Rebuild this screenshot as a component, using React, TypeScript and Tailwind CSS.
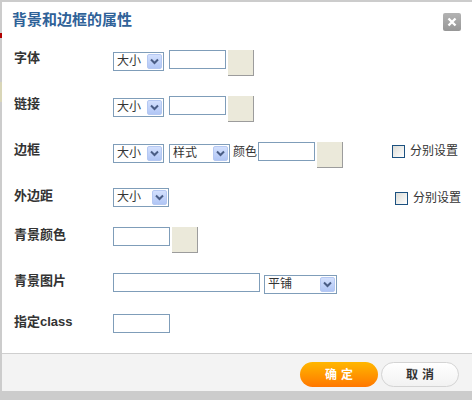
import React from "react";

const F = { fontFamily: '"Liberation Sans", "Noto Sans CJK SC", sans-serif' };

function Arrow() {
  return (
    <div className="w-[15px] h-[15px] mt-[1px] mr-[1px] rounded-[2px] border border-[#b5c8f2] bg-gradient-to-b from-[#d3e0fd] to-[#b1c6f5] flex items-center justify-center">
      <svg width="9" height="7" viewBox="0 0 9 7">
        <path d="M1 1.5 L4.5 5 L8 1.5" fill="none" stroke="#4a5d85" strokeWidth="2" />
      </svg>
    </div>
  );
}

function Select({ w, label }: { w: string; label: string }) {
  return (
    <div className={`${w} h-[19px] border border-[#7f9db9] bg-white flex items-start justify-between`}>
      <span className="pl-[3px] text-[12px] leading-[17px] text-[#333]">{label}</span>
      <Arrow />
    </div>
  );
}

function Input({ w }: { w: string }) {
  return <div className={`${w} h-[19px] border border-[#7f9db9] bg-white`} />;
}

function Swatch() {
  return <div className="w-[26px] h-[26px] bg-[#ebe9da] border-r border-b border-[#9c9c9c]" />;
}

function Check() {
  return (
    <div className="flex items-center gap-[5px]">
      <div className="w-[13px] h-[13px] border border-[#1c5180] bg-gradient-to-br from-[#dcdcd6] to-white" />
      <span className="text-[12px] leading-[16px] text-[#333]">分别设置</span>
    </div>
  );
}

function Label({ t }: { t: string }) {
  return <div className="w-[99px] shrink-0 text-[13px] leading-[16px] font-bold text-[#333]">{t}</div>;
}

export default function App() {
  return (
    <div style={F} className="w-[472px] h-[400px] bg-[#cccccc] flex flex-col pt-[2px] overflow-hidden">
      <div className="flex h-[389px]">
        <div className="w-[2px] flex flex-col">
          <div className="h-[31px]" />
          <div className="h-[5px] bg-[#b00000]" />
          <div className="h-[44px]" />
          <div className="h-[20px] bg-[#d9d6b8]" />
        </div>
        <div className="w-[470px] bg-white flex flex-col">
          <div className="flex items-start justify-between pl-[10px] pr-[11px] pt-[8px] h-[48px]">
            <div className="text-[15px] leading-[20px] font-bold text-[#2f6298]">背景和边框的属性</div>
            <div className="mt-[3px] w-[18px] h-[18px] rounded-[2px] bg-gradient-to-b from-[#b3b3b3] to-[#979797] flex items-center justify-center">
              <svg width="10" height="10" viewBox="0 0 10 10">
                <path d="M1.5 1.5 L8.5 8.5 M8.5 1.5 L1.5 8.5" stroke="white" strokeWidth="2.4" />
              </svg>
            </div>
          </div>
          <div className="flex-1 flex flex-col pl-[12px]">
            <div className="h-[46px] flex items-start">
              <Label t="字体" />
              <div className="mt-[2px]"><Select w="w-[51px]" label="大小" /></div>
              <div className="ml-[5px]"><Input w="w-[57px]" /></div>
              <div className="ml-[2px]"><Swatch /></div>
            </div>
            <div className="h-[46px] flex items-start">
              <Label t="链接" />
              <div className="mt-[2px]"><Select w="w-[51px]" label="大小" /></div>
              <div className="ml-[5px]"><Input w="w-[57px]" /></div>
              <div className="ml-[2px]"><Swatch /></div>
            </div>
            <div className="h-[46px] flex items-start">
              <Label t="边框" />
              <div className="mt-[2px]"><Select w="w-[51px]" label="大小" /></div>
              <div className="mt-[2px] ml-[5px]"><Select w="w-[61px]" label="样式" /></div>
              <span className="mt-[2px] ml-[3px] text-[12px] leading-[16px] text-[#333]">颜色</span>
              <div className="ml-[1px]"><Input w="w-[57px]" /></div>
              <div className="ml-[2px]"><Swatch /></div>
              <div className="ml-[49px] mt-[1px]"><Check /></div>
            </div>
            <div className="h-[39px] flex items-start">
              <Label t="外边距" />
              <Select w="w-[56px]" label="大小" />
              <div className="ml-[226px] mt-[2px]"><Check /></div>
            </div>
            <div className="h-[46px] flex items-start">
              <Label t="青景颜色" />
              <Input w="w-[57px]" />
              <div className="ml-[2px]"><Swatch /></div>
            </div>
            <div className="h-[41px] flex items-start">
              <Label t="青景图片" />
              <Input w="w-[147px]" />
              <div className="mt-[2px] ml-[4px]"><Select w="w-[73px]" label="平铺" /></div>
            </div>
            <div className="flex items-start">
              <Label t="指定class" />
              <Input w="w-[57px]" />
            </div>
          </div>
          <div className="h-[38px] border-t border-[#cfcfcf] bg-[#f3f3f3] flex justify-end items-start pt-[8px] pr-[13px] gap-[3px]">
            <div className="w-[78px] h-[25px] rounded-full bg-gradient-to-b from-[#ffb700] to-[#ff7600] flex items-center justify-center text-white font-bold text-[12px] tracking-[4px] pl-[4px]">确定</div>
            <div className="w-[78px] h-[25px] rounded-full border border-[#d4d4d4] bg-gradient-to-b from-white to-[#f2f2f2] flex items-center justify-center text-[#333] font-bold text-[12px] tracking-[4px] pl-[4px]">取消</div>
          </div>
        </div>
      </div>
    </div>
  );
}
